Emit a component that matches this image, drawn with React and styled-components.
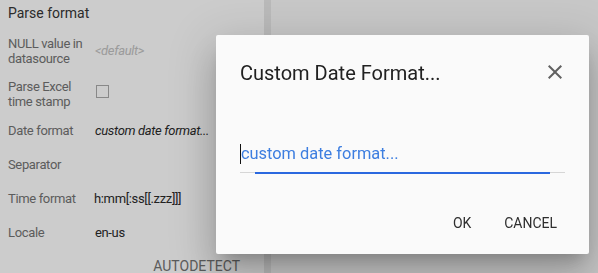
import React from "react";
import styled, { createGlobalStyle } from "styled-components";
import { MdClose } from "react-icons/md";

const GlobalStyle = createGlobalStyle`
  html, body {
    margin: 0;
    padding: 0;
    width: 598px;
    height: 273px;
    overflow: hidden;
    font-family: Roboto, "Liberation Sans", sans-serif;
  }
`

const Page = styled.div`
  display: flex;
  width: 598px;
  height: 273px;
  background: #ffffff;
`

const SidePanel = styled.div`
  width: 264px;
  display: flex;
  flex-direction: column;
  overflow: hidden;
`

const Divider = styled.div`
  width: 7px;
  background: #e9e9e9;
`

const Workspace = styled.div`
  flex: 1;
  background: #fafafa;
`

const PanelTitle = styled.div`
  flex-shrink: 0;
  height: 27px;
  padding: 3px 8px 0;
  box-sizing: border-box;
  font-size: 14px;
  line-height: 20px;
  color: #363636;
`

const Row = styled.div`
  flex-shrink: 0;
  display: flex;
  align-items: center;
  height: ${(p) => p.$h || 34}px;
  padding-left: 8px;
`

const Label = styled.div`
  width: 87px;
  flex-shrink: 0;
  font-size: 13px;
  line-height: 15px;
  letter-spacing: -0.35px;
  color: #747474;
`

const Value = styled.div`
  font-size: 13px;
  line-height: 15px;
  letter-spacing: -0.35px;
  color: ${(p) => (p.$muted ? "#c2c2c2" : "#2a2a2a")};
  font-style: ${(p) => (p.$italic ? "italic" : "normal")};
  white-space: nowrap;
`

const Check = styled.div`
  width: 13px;
  height: 13px;
  margin: -5px 0 0 1px;
  box-sizing: border-box;
  border: 1px solid #ababab;
`

const ButtonRow = styled.div`
  flex-shrink: 0;
  display: flex;
  justify-content: flex-end;
  align-items: center;
  height: 34px;
  padding-right: 16px;
`

const TextButton = styled.button`
  min-width: 64px;
  height: 36px;
  padding: 0 8px;
  border: none;
  background: transparent;
  font-family: Roboto, "Liberation Sans", sans-serif;
  font-size: 14px;
  text-transform: uppercase;
  color: ${(p) => p.$color || "#2e2e2e"};
  cursor: pointer;
`

const Backdrop = styled.div`
  position: fixed;
  inset: 0;
  background: rgba(0, 0, 0, 0.2);
`

const Dialog = styled.div`
  position: absolute;
  left: 216px;
  top: 35px;
  width: 373px;
  height: 219px;
  box-sizing: border-box;
  padding: 26px 24px 13px;
  display: flex;
  flex-direction: column;
  background: #fafafa;
  border-radius: 2px;
  box-shadow: 0px 11px 15px -7px rgba(0, 0, 0, 0.2),
    0px 24px 38px 3px rgba(0, 0, 0, 0.14), 0px 9px 46px 8px rgba(0, 0, 0, 0.12);
`

const DialogHeader = styled.div`
  display: flex;
  justify-content: space-between;
  align-items: center;
  height: 24px;
`

const DialogTitle = styled.div`
  font-size: 20px;
  line-height: 24px;
  color: #212121;
`

const CloseButton = styled.button`
  display: flex;
  width: 24px;
  height: 24px;
  margin: -3px -2px 0 0;
  padding: 0;
  border: none;
  background: transparent;
  color: #616161;
  cursor: pointer;
`

const Field = styled.div`
  position: relative;
  margin-top: 58px;
  padding-bottom: 7px;
  border-bottom: 1px solid #d6d6d6;
  display: flex;
  align-items: center;
`

const Caret = styled.span`
  width: 1px;
  height: 20px;
  background: #111;
`

const FieldText = styled.div`
  font-size: 16.4px;
  line-height: 22px;
  color: #3d7ee0;
`

const FocusBar = styled.div`
  position: absolute;
  left: 15px;
  right: 15px;
  bottom: -2px;
  height: 2px;
  background: #2a68df;
`

const Actions = styled.div`
  display: flex;
  justify-content: flex-end;
  gap: 2px;
  margin-top: auto;
`

export default function App() {
  return (
    <>
      <GlobalStyle />
      <Page>
        <SidePanel>
          <PanelTitle>Parse format</PanelTitle>
          <Row $h={47}>
            <Label>NULL value in datasource</Label>
            <Value $muted $italic>&lt;default&gt;</Value>
          </Row>
          <Row $h={39}>
            <Label>Parse Excel time stamp</Label>
            <Check />
          </Row>
          <Row>
            <Label>Date format</Label>
            <Value $italic>custom date format...</Value>
          </Row>
          <Row>
            <Label>Separator</Label>
          </Row>
          <Row>
            <Label>Time format</Label>
            <Value style={{ marginLeft: -1 }}>h:mm[:ss[[.zzz]]]</Value>
          </Row>
          <Row>
            <Label>Locale</Label>
            <Value>en-us</Value>
          </Row>
          <ButtonRow>
            <TextButton $color="#737373">Autodetect</TextButton>
          </ButtonRow>
        </SidePanel>
        <Divider />
        <Workspace />
      </Page>
      <Backdrop />
      <Dialog>
        <DialogHeader>
          <DialogTitle>Custom Date Format...</DialogTitle>
          <CloseButton>
            <MdClose size={24} />
          </CloseButton>
        </DialogHeader>
        <Field>
          <Caret />
          <FieldText>custom date format...</FieldText>
          <FocusBar />
        </Field>
        <Actions>
          <TextButton>OK</TextButton>
          <TextButton>Cancel</TextButton>
        </Actions>
      </Dialog>
    </>
  );
}
